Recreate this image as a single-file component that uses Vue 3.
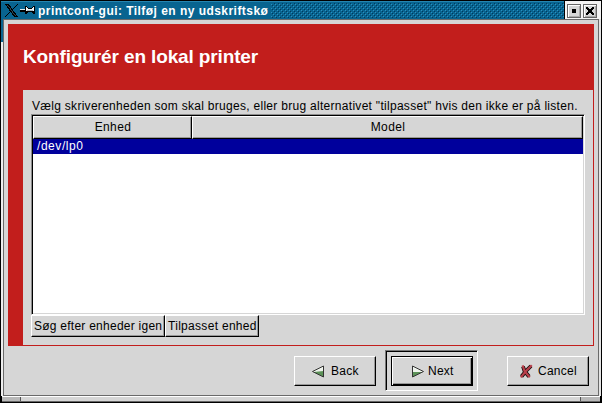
<script setup>
const title = 'printconf-gui: Tilføj en ny udskriftskø'
const devices = ['/dev/lp0']
</script>

<template>
  <div class="window">
    <header class="titlebar">
      <svg class="title-icons" width="36" height="18" viewBox="0 0 36 18" shape-rendering="crispEdges">
        <path d="M4 3h4l9 13h-4z" fill="#000" />
        <path d="M16 3h1L5 16H4z" fill="#000" />
        <path d="M6 4h1l8 11h-1z" fill="#2c4a58" />
        <path d="M19 9h6v2h-6z" fill="#000" />
        <path d="M19 8h5v1h-5z" fill="#dfe8ee" />
        <path d="M24 5h2v1h1v1h4V6h1V5h2v8h-2v-1h-1v-1h-4v1h-1v1h-2z" fill="#000" />
        <path d="M25 6h1v1h1v1h4V7h1V6h1v4h-1V9h-6v1h-1z" fill="#eef4f6" />
        <path d="M26 9h6v1h-6z" fill="#a9b9c0" />
      </svg>
      <span class="title-text">{{ title }}</span>
      <svg class="texture" width="293" height="18">
        <defs>
          <pattern id="dots" width="4" height="4" patternUnits="userSpaceOnUse">
            <rect x="0" y="3" width="1" height="1" fill="#2a90c0" />
            <rect x="1" y="0" width="1" height="1" fill="#033a5c" />
            <rect x="2" y="1" width="1" height="1" fill="#2a90c0" />
            <rect x="3" y="2" width="1" height="1" fill="#033a5c" />
          </pattern>
        </defs>
        <rect y="2" width="293" height="15" fill="url(#dots)" />
      </svg>
      <div class="controls">
        <span class="control">
          <svg width="12" height="12" shape-rendering="crispEdges"><rect x="4" y="4" width="4" height="4" /></svg>
        </span>
        <span class="control">
          <svg width="12" height="12" shape-rendering="crispEdges">
            <path d="M2 2h2v1h1v1h2V3h1V2h2v2H9v1H8v2h1v1h1v2H8V9H7V8H5v1H4v1H2V8h1V7h1V5H3V4H2z" />
          </svg>
        </span>
      </div>
    </header>

    <div class="client">
      <main class="banner">
        <h1>Konfigurér en lokal printer</h1>
        <section class="page">
          <p class="prompt">Vælg skriverenheden som skal bruges, eller brug alternativet "tilpasset" hvis den ikke er på listen.</p>
          <div class="list">
            <div class="columns">
              <div class="column"><span>Enhed</span></div>
              <div class="column"><span>Model</span></div>
            </div>
            <div v-for="device in devices" :key="device" class="row"><span>{{ device }}</span></div>
          </div>
          <div class="tools">
            <button class="scan"><span>Søg efter enheder igen</span></button>
            <button class="custom"><span>Tilpasset enhed</span></button>
          </div>
        </section>
      </main>
      <footer class="actions">
        <button class="action">
          <svg width="14" height="13" viewBox="0 0 14 13">
            <path d="M12.500 1v11L1.500 6.500z" fill="#eef3ec" />
            <path d="M12.500 6v6L2.500 7z" fill="#5c9258" />
            <path d="M12.500 1v11L1.500 6.500z" fill="none" stroke="#333" />
          </svg>
          <span>Back</span>
        </button>
        <div class="default-frame">
          <button class="action default">
            <svg width="14" height="13" viewBox="0 0 14 13">
              <path d="M1.500 1v11l11-5.500z" fill="#eef3ec" />
              <path d="M1.500 7v5l10-5z" fill="#5c9258" />
              <path d="M1.500 1v11l11-5.500z" fill="none" stroke="#333" />
            </svg>
            <span>Next</span>
          </button>
        </div>
        <button class="action cancel">
          <svg width="14" height="15" viewBox="0 0 14 15">
            <path d="M4 2.500l1.500 4.500L10 12.500M12 2L7 7l-4.500 5.500" fill="none" stroke="#1a0a0a" stroke-width="3.800" />
            <path d="M4 2.500l1.500 4.500L10 12.500M12 2L7 7l-4.500 5.500" fill="none" stroke="#b83f4b" stroke-width="2.200" stroke-linecap="square" />
          </svg>
          <span>Cancel</span>
        </button>
      </footer>
    </div>
    <div class="resize"><i></i><b></b><i></i></div>
  </div>
</template>

<style>
body { margin: 0; background: #000; overflow: hidden; }
</style>

<style scoped>
* { box-sizing: border-box; }
.window {
  width: 602px; height: 403px; padding: 0 1px 1px;
  background: linear-gradient(90deg, #000 1px, #086490 1px, #086490 3px, #000 3px) 0 0 / 100% 41px no-repeat #000;
  color: #000;
  font: 12px/15px "Liberation Sans", Arial, sans-serif;
  letter-spacing: 0.25px;
  display: flex; flex-direction: column;
  border-top: 1px solid #000;
}
span, p, h1 { white-space: nowrap; }
.titlebar {
  height: 18px; flex: none; display: flex; background: #086490;
  border-top: 1px solid #2585b0;
}
.title-icons { flex: none; width: 36px; margin: -1px 1px 0 0; }
.title-text {
  width: 233px; flex: none; color: #fff; font-weight: bold; line-height: 18px;
  letter-spacing: 0.46px;
}
.texture { flex: none; margin-top: -1px; }
.controls {
  flex: none; width: 37px; height: 18px; margin-top: -1px; padding: 3px 2px 0 2px;
  background: #f4f4f4; border-left: 1px solid #000; display: flex; gap: 2px;
}
.control {
  width: 14px; height: 14px; border: 1px solid #666; background: #d6d6d6;
  box-shadow: inset 1px 1px #fff, inset -1px -1px #aaa;
}
.control svg { display: block; }
.client {
  height: 377px; flex: none; background: #d6d6d6;
  border: 1px solid #6a6a6a; margin: 0 2px 0 2px; padding: 4px 4px 0 4px;
  box-shadow: 2px 0 #e4e4e4;
  position: relative;
}
.client::before {
  content: ""; position: absolute; left: -3px; top: 22px; bottom: -1px; width: 2px; background: #eee;
}
.banner { width: 586px; height: 322px; background: #c21e1c; padding: 0 1px 1px 15px; }
h1 {
  margin: 0; height: 66px; font-size: 19px; line-height: 20px; padding-top: 23px;
  color: #fff; font-weight: bold; letter-spacing: -0.13px;
}
.page { height: 255px; background: #d6d6d6; padding: 9px 8px 0 8px; }
.prompt { margin: 0 0 0 1px; height: 15px; line-height: 14px; letter-spacing: 0.29px; }
.list {
  width: 554px; height: 201px; background: #fff;
  border: 1px solid; border-color: #8c8c8c #fff #fff #8c8c8c;
  box-shadow: inset 1px 1px #000, inset -1px -1px #d6d6d6;
  padding: 2px 1px 1px 1px;
}
.columns { display: grid; grid-template-columns: 159px 391px; height: 22px; margin: -1px 0 1px; }
.column, button {
  background: #d6d6d6; border: 1px solid; border-color: #fff #000 #000 #fff;
  box-shadow: inset -1px -1px #989898;
}
.column { text-align: center; padding-left: 1px; line-height: 21px; letter-spacing: 0.4px; }
.row {
  height: 15px; margin-top: 1px; background: #00009c; color: #fff; padding-left: 4px;
  letter-spacing: 0.55px;
}
.tools { display: flex; }
button { font: inherit; letter-spacing: inherit; color: #000; padding: 0; margin: 0; border-radius: 0; }
.tools button { height: 22px; text-align: left; padding-left: 2px; }
.scan { width: 134px; }
.custom { width: 94px; letter-spacing: 0.3px; }
.actions { display: flex; height: 49px; padding: 4px 5px 0; justify-content: flex-end; align-items: flex-start; }
.action {
  width: 82px; height: 30px; margin-top: 6px; display: flex; align-items: center; padding-left: 16px; gap: 6px;
}
.action svg { flex: none; }
.default-frame {
  width: 93px; height: 41px; margin: 0 29px 0 9px; padding: 4px;
  border: 1px solid; border-color: #777 #fff #fff #777; box-shadow: inset 1px 1px #000;
}
.default {
  margin: 1px; border: 1px solid #000; padding-left: 19px; gap: 3px;
  box-shadow: inset 1px 1px #fff, inset -1px -1px #000, inset -2px -2px #989898;
}
.cancel { padding-left: 11px; gap: 5px; }
.resize {
  height: 6px; flex: none; display: grid; grid-template-columns: 19px 560px 1fr;
  margin: 0 1px; border-top: 1px solid #fff; border-bottom: 1px solid #666; background: #d6d6d6;
}
.resize i { background: #b8b8b8; }
.resize i:first-child, .resize b { border-right: 1px solid #555; }
</style>
